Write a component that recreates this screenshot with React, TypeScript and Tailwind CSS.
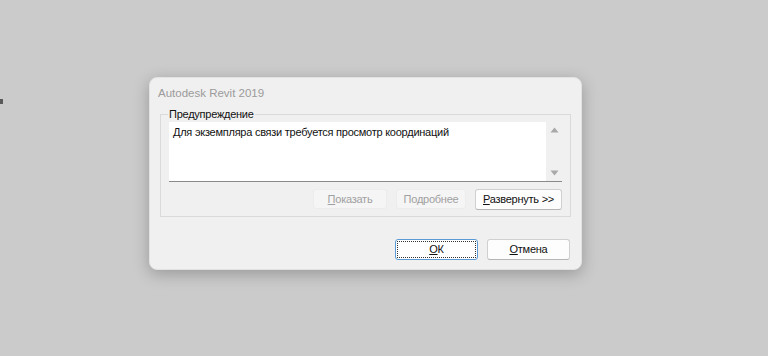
import React from "react";

const font = { fontFamily: '"Liberation Sans", Arial, sans-serif' };

function Btn({ children, disabled, focused, w }: { children: React.ReactNode; disabled?: boolean; focused?: boolean; w: string }) {
  if (disabled) {
    return (
      <div className={`${w} h-[20px] flex items-center justify-center rounded-[3px] bg-[#f5f5f5] border border-[#ececec] text-[11px] tracking-[-0.25px] text-[#a0a0a0]`}>
        {children}
      </div>
    );
  }
  if (focused) {
    return (
      <div className={`${w} h-[21px] flex items-center justify-center rounded-[3px] bg-white border border-[#5b9bd5] p-[1px]`}>
        <div className="w-full h-full border border-dotted border-[#333] flex items-center justify-center text-[11px] tracking-[-0.25px] text-[#111]">
          {children}
        </div>
      </div>
    );
  }
  return (
    <div className={`${w} h-[21px] flex items-center justify-center rounded-[3px] bg-[#fdfdfd] border border-[#d0d0d0] border-b-[#b5b5b5] text-[11px] tracking-[-0.25px] text-[#111]`}>
      {children}
    </div>
  );
}

export default function App() {
  return (
    <div className="w-[768px] h-[356px] bg-[#cbcbcb] relative overflow-hidden" style={font}>
      <div className="absolute left-0 top-[99px] w-[3px] h-[5px] bg-[#5a5a5a]" />
      <div className="pl-[149px] pt-[77px]">
        <div className="w-[433px] h-[193px] rounded-[8px] bg-[#f0f0f0] border border-[#e2e2e2] shadow-[0_4px_16px_rgba(0,0,0,0.25)] flex flex-col">
          <div className="h-[29px] pl-[8px] pt-[7px] text-[11.5px] text-[#9b9b9b] leading-[16px]">Autodesk Revit 2019</div>
          <div className="px-[10px]">
            <fieldset className="border border-[#dadada] h-[110px] px-[8px] pb-[8px]">
              <legend className="ml-[-1px] px-[1px] text-[11px] tracking-[-0.25px] leading-[14px] text-[#111]">Предупреждение</legend>
              <div className="mt-[1px] h-[60px] bg-white border-b border-[#8a8a8a] flex">
                <div className="flex-1 pl-[4px] pt-[2px] text-[11px] tracking-[-0.25px] leading-[16px] text-[#111]">
                  Для экземпляра связи требуется просмотр координаций
                </div>
                <div className="w-[16px] bg-[#f0f0f0] flex flex-col items-center justify-between py-[5px]">
                  <svg width="9" height="6" viewBox="0 0 9 6"><path d="M4.5 0.5 L8.5 5.5 L0.5 5.5 Z" fill="#a8a8a8" /></svg>
                  <svg width="9" height="6" viewBox="0 0 9 6"><path d="M0.5 0.5 L8.5 0.5 L4.5 5.5 Z" fill="#a8a8a8" /></svg>
                </div>
              </div>
              <div className="mt-[7px] flex justify-end gap-[9px]">
                <Btn disabled w="w-[74px]"><span><u>П</u>оказать</span></Btn>
                <Btn disabled w="w-[70px]"><span>По<u>д</u>робнее</span></Btn>
                <Btn w="w-[87px]"><span><u>Р</u>азвернуть &gt;&gt;</span></Btn>
              </div>
            </fieldset>
          </div>
          <div className="mt-[22px] pr-[11px] flex justify-end gap-[9px]">
            <Btn focused w="w-[83px]"><span><u>О</u>К</span></Btn>
            <Btn w="w-[83px]"><span><u>О</u>тмена</span></Btn>
          </div>
        </div>
      </div>
    </div>
  );
}
